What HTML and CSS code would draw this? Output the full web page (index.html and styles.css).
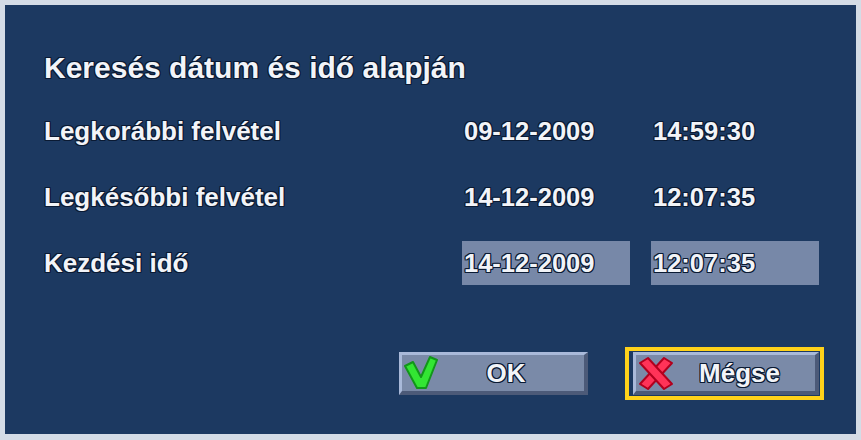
FILE: index.html
```html
<!DOCTYPE html>
<html>
<head>
<meta charset="utf-8">
<link rel="stylesheet" href="styles.css">
</head>
<body>
<div class="panel">
  <h1 class="title">Keresés dátum és idő alapján</h1>
  <div class="grid">
    <div class="label">Legkorábbi felvétel</div>
    <div class="value">09-12-2009</div>
    <div class="value">14:59:30</div>
    <div class="label">Legkésőbbi felvétel</div>
    <div class="value">14-12-2009</div>
    <div class="value">12:07:35</div>
    <div class="label">Kezdési idő</div>
    <div class="value field">14-12-2009</div>
    <div class="value field">12:07:35</div>
  </div>
  <div class="actions">
    <div class="btn ok">
      <svg class="icon" width="34" height="34" viewBox="0 0 34 34">
        <polygon points="1,10 9,6 17,21 26,1 33,4 22,32 13,32" fill="#33e633" stroke="#12961a" stroke-width="2" stroke-linejoin="round"/>
      </svg>
      <span class="btn-text">OK</span>
    </div>
    <div class="focus">
      <div class="btn cancel">
        <svg class="icon" width="36" height="35" viewBox="0 0 36 35">
          <g fill="#ff3358" stroke="#b0001e" stroke-width="2" stroke-linejoin="round">
            <polygon points="2,28 26,2 34,7 10,33"/>
            <polygon points="2,7 10,2 34,28 26,33"/>
          </g>
        </svg>
        <span class="btn-text">Mégse</span>
      </div>
    </div>
  </div>
</div>
</body>
</html>
```

FILE: styles.css
```css
html, body {
  margin: 0;
  padding: 0;
}
body {
  background: #d4dce6;
  width: 861px;
  height: 440px;
  padding-top: 5px;
  padding-left: 5px;
  box-sizing: border-box;
  font-family: "Liberation Sans", Arial, sans-serif;
  font-weight: bold;
  color: #f2f4f8;
}
.panel {
  width: 851px;
  height: 429px;
  background: #1c3961;
  box-sizing: border-box;
  padding: 40px 0 0 39px;
}
.title, .label, .value, .btn-text {
  text-shadow:
    1px 0 0 #0a1a33, -1px 0 0 #0a1a33, 0 1px 0 #0a1a33, 0 -1px 0 #0a1a33,
    1px 1px 0 #0a1a33, -1px -1px 0 #0a1a33, 1px -1px 0 #0a1a33, -1px 1px 0 #0a1a33;
}
.title {
  margin: 0;
  font-size: 30px;
  line-height: 46px;
  height: 46px;
}
.grid {
  margin-top: 18px;
  display: grid;
  grid-template-columns: 397px 168px 168px;
  column-gap: 21px;
  grid-auto-rows: 44px;
  row-gap: 22px;
}
.label, .value {
  line-height: 44px;
}
.label {
  font-size: 26px;
}
.value {
  font-size: 25.5px;
  padding-left: 2px;
}
.field {
  background: #7788a8;
}
.actions {
  display: flex;
  align-items: center;
  margin-top: 62px;
  padding-left: 355px;
  gap: 37px;
}
.btn {
  position: relative;
  display: flex;
  align-items: center;
  height: 43px;
  box-sizing: border-box;
  background: #7a8aa8;
  border-style: solid;
  border-width: 3px 4px 4px 3px;
  border-color: #a9b9d9 #4c5a78 #4c5a78 #a9b9d9;
}
.ok {
  width: 189px;
}
.cancel {
  width: 186px;
}
.icon {
  flex: none;
  margin-left: 2px;
}
.btn-text {
  flex: 1;
  text-align: center;
  font-size: 26px;
  padding-right: 10px;
}
.focus {
  border: 4px solid #ffd21a;
  padding: 1px 1px 1px 4px;
}
```
